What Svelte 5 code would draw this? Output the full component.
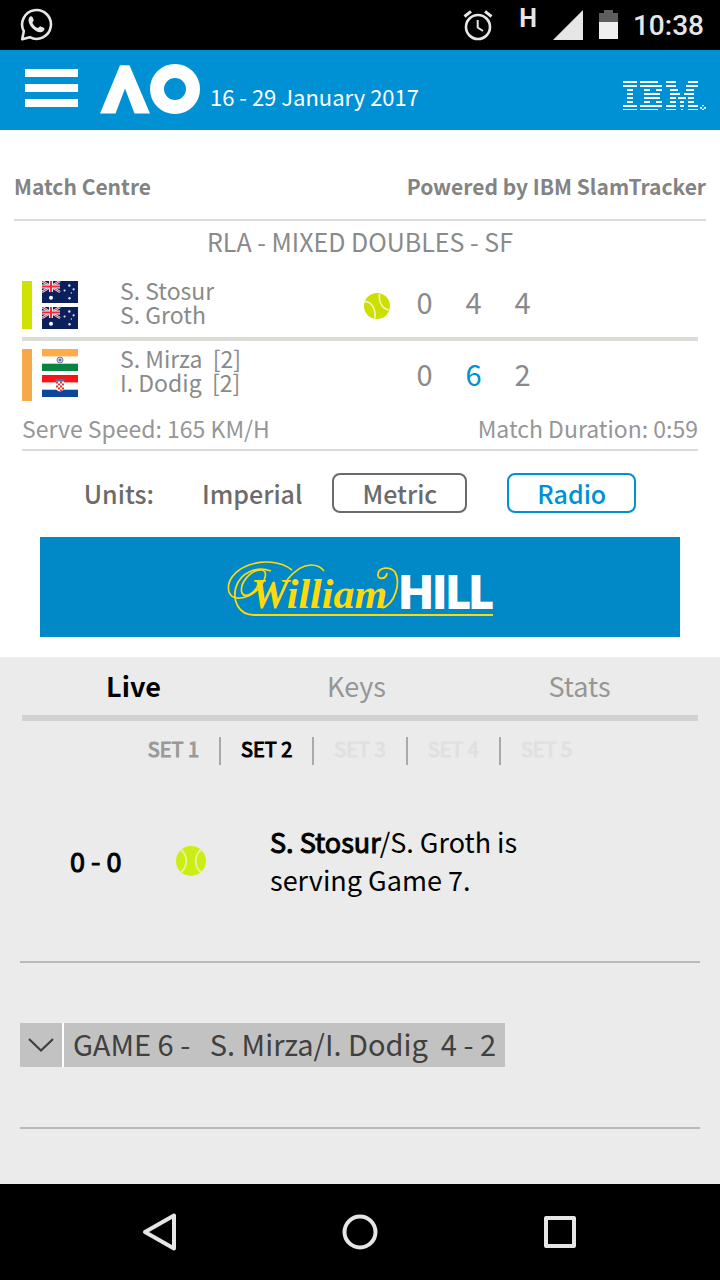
<script>
  const rows = [
    { color: '#d0e000', names: ['S. Stosur', 'S. Groth'], flags: ['au', 'au'], serving: true, scores: [0, 4, 4], won: -1 },
    { color: '#f5a94a', names: ['S. Mirza\u00a0 [2]', 'I. Dodig\u00a0 [2]'], flags: ['in', 'hr'], serving: false, scores: [0, 6, 2], won: 1 }
  ];
  const tabs = ['Live', 'Keys', 'Stats'];
  const sets = [1, 2, 3, 4, 5];
  let tab = $state('Live');
  let set = $state(2);
  let units = $state('Metric');

  // Stripes of the IBM mark: [row, start, end]
  const stripes = [
    [0,0,42],[1,0,42],[2,12,30],[3,12,30],[4,12,30],[5,12,30],[6,0,42],[7,0,42],
    [0,51,105],[1,51,117],[2,63,81],[2,99,117],[3,63,111],[4,63,111],[5,63,81],[5,99,117],[6,51,117],[7,51,105],
    [0,129,159],[0,195,225],[1,129,159],[1,189,225],[2,141,165],[2,189,213],[3,141,171],[3,183,213],
    [4,141,159],[4,165,189],[4,195,213],[5,141,159],[5,171,183],[5,195,213],[6,129,159],[6,171,183],[6,195,225],[7,129,159],[7,174,180],[7,195,225]
  ];
</script>

{#snippet flag(code)}
  <svg class="flag" viewBox="0 0 36 22" aria-hidden="true">
    {#if code === 'au'}
      <rect width="36" height="22" fill="#0a1f5c" />
      <path d="M0 0L18 11M18 0L0 11" stroke="#e8e4f0" stroke-width="2.4" />
      <path d="M0 0L18 11M18 0L0 11" stroke="#e03040" stroke-width="1" />
      <path d="M9 0V11M0 5.5H18" stroke="#f4eef4" stroke-width="4" />
      <path d="M9 0V11M0 5.5H18" stroke="#ee2b36" stroke-width="2" />
      <circle cx="9" cy="16.7" r="2" fill="#fff" />
      <g fill="#dfe4f2"><circle cx="27.3" cy="4.5" r="1.2" /><circle cx="22.6" cy="9.5" r="1.1" /><circle cx="31.6" cy="8.3" r="1.1" /><circle cx="29.3" cy="12" r=".7" /><circle cx="27.5" cy="17.3" r="1.2" /></g>
    {:else if code === 'in'}
      <rect width="36" height="22" fill="#fff" />
      <rect width="36" height="7.4" fill="#ffac46" />
      <rect y="14.7" width="36" height="7.3" fill="#068440" />
      <circle cx="18" cy="11" r="3" fill="#c9c9e2" stroke="#77779f" stroke-width="1" />
      <circle cx="18" cy="11" r="1.1" fill="#4d4d88" />
    {:else}
      <rect width="36" height="22" fill="#fff" />
      <rect width="36" height="7.4" fill="#fb1414" />
      <rect y="14.7" width="36" height="7.3" fill="#0c479d" />
      <path d="M13.5 3.5l2 .8 2.5-.9 2.5.9 2-.8v3h-9z" fill="#4a72a8" />
      <path d="M14 6.5h8v6q0 3.5-4 4-4-.5-4-4z" fill="#fff" />
      <path d="M14 6.5h2v2h-2zM18 6.5h2v2h-2zM16 8.5h2v2h-2zM20 8.5h2v2h-2zM14 10.5h2v2h-2zM18 10.5h2v2h-2zM16 12.5h2v2h-2zM20 12.5h2v2h-2zM18 14.5h2v1.6l-2 .4z" fill="#ee3030" />
    {/if}
  </svg>
{/snippet}

<div class="screen">
  <div class="status">
    <svg width="34" height="36" viewBox="0 0 34 36" aria-label="WhatsApp" role="img">
      <path d="M3.2 32.2L4.8 24.2A14.4 14.4 0 1 1 10.8 30.2Z" fill="none" stroke="#e6e6e6" stroke-width="2.6" stroke-linejoin="round" />
      <path d="M10.2 10.4c1-1.6 2.7-1.6 3.4-.2l1 2.5c.5 1.3-1.4 2.2-1.2 3 1 2.4 3 4.400 5.400 5.200 1 .3 1.700-2 3-1.500l3 1.400c1 .6.800 2-.3 3.100-3 2.700-7.400.7-10.500-2.200-3.600-3.500-5.600-8.100-3.800-11.300z" fill="#e6e6e6" />
    </svg>
    <div class="status-right">
      <svg width="30" height="32" viewBox="0 0 30 32" aria-hidden="true" fill="none" stroke="#e6e6e6">
        <circle cx="15" cy="18" r="12" stroke-width="2.6" />
        <path d="M14.700 11V18.500L20 22" stroke-width="2" />
        <path d="M1.500 7.500L8 2.300M28.500 7.500L22 2.300" stroke-width="3" />
      </svg>
      <span class="net">H</span>
      <svg width="30" height="30" viewBox="0 0 30 30" aria-hidden="true"><path d="M0 30L30 0V30z" fill="#e6e6e6" /></svg>
      <svg class="battery" width="20" height="30" viewBox="0 0 20 30" aria-hidden="true"><path d="M0 3H5V0H14V3H19V13H0z" fill="#5e5e5e" /><path d="M0 12H19V29H0z" fill="#efefef" /></svg>
      <time>10:38</time>
    </div>
  </div>

  <header>
    <button class="menu" aria-label="Menu"><svg width="53" height="38" viewBox="0 0 53 38"><path d="M0 0H53V8H0zM0 15H53V23H0zM0 30H53V38H0z" fill="#fff" /></svg></button>
    <svg width="100" height="50" viewBox="0 0 100 50" role="img" aria-label="AO">
      <path d="M20 1.200H29.500L50 49.500H34.500L25 24.500L15.500 49.500H0z" fill="#fff" />
      <circle cx="75" cy="25" r="18" fill="none" stroke="#fff" stroke-width="14" />
    </svg>
    <span class="dates">16 - 29 January 2017</span>
    <svg class="ibm" width="83" height="29" viewBox="0 0 249 87" role="img" aria-label="IBM">
      {#each stripes as [r, a, b]}
        <rect x={a} y={r * 12} width={b - a} height={r === 7 ? 3 : 6} fill="#fff" />
      {/each}
      <path d="M237 72h6v4h-6zM231 78h6v5h-6zM243 78h6v5h-6zM237 83h6v4h-6z" fill="#fff" />
    </svg>
  </header>

  <main>
    <div class="titles"><h1>Match Centre</h1><span>Powered by IBM SlamTracker</span></div>
    <section class="board">
      <h2>RLA - MIXED DOUBLES - SF</h2>
      <table>
        <colgroup><col class="c-flag" /><col class="c-name" /><col class="c-ball" /><col class="c-pts" /><col class="c-pts" /><col class="c-pts" /><col /></colgroup>
        <tbody>
          {#each rows as r}
            <tr>
              <td><div class="team"><i style="background:{r.color}"></i><div class="flags">{@render flag(r.flags[0])}{@render flag(r.flags[1])}</div></div></td>
              <th scope="row">{r.names[0]}<br />{r.names[1]}</th>
              <td>
                {#if r.serving}
                  <svg class="ball" width="26" height="26" viewBox="0 0 26 26" role="img" aria-label="Serving"><circle cx="13" cy="13" r="13" fill="#cddf00" /><path d="M1 8.500C8 9 12 16 10.800 25.500M15.500.8C14.500 9 18 15.500 25 17.200" fill="none" stroke="#f1f6c8" stroke-width="1.600" /></svg>
                {/if}
              </td>
              {#each r.scores as s, i}<td class="score" class:won={i === r.won}>{s}</td>{/each}
              <td></td>
            </tr>
          {/each}
        </tbody>
      </table>
      <div class="facts"><span>Serve Speed: 165 KM/H</span><span>Match Duration: 0:59</span></div>
    </section>

    <div class="units">
      <span class="label">Units:</span>
      <button class:on={units === 'Imperial'} onclick={() => (units = 'Imperial')}>Imperial</button>
      <button class:on={units === 'Metric'} onclick={() => (units = 'Metric')}>Metric</button>
      <button class="radio">Radio</button>
    </div>

    <a class="ad" href="#william-hill" aria-label="William Hill">
      <svg width="270" height="60" viewBox="0 0 270 60">
        <g fill="none" stroke="#ffd90a">
          <path d="M67 13C56 4 38 3 24 8C10 13 1 24 4 35C8 46 26 41 35 30C41 22 43 13 36 13C25 13 14 27 17 36C20 42 30 36 33 28" stroke-width="1.700" />
          <path d="M46 14C32 9 16 15 11 30C7 44 14 58 29 58H268" stroke-width="1.800" />
          <path d="M62 23C70 13 78 8 86 8C92 8 96 10 99 14" stroke-width="1.600" />
          <path d="M162 16C161 23 152 23 153 17C154 10 165 9 170 15C176 26 170 47 157 51" stroke-width="1.800" />
        </g>
        <text class="script" x="26" y="51">William</text>
        <text class="hill" x="174" y="51">HILL</text>
      </svg>
    </a>
  </main>

  <section class="live">
    <nav class="tabs" aria-label="Views">
      {#each tabs as t}<button class:on={tab === t} onclick={() => (tab = t)}>{t}</button>{/each}
    </nav>
    <div class="sets">
      {#each sets as n}<button class:on={set === n} disabled={n > 2} onclick={() => (set = n)}>SET {n}</button>{/each}
    </div>
    <div class="point">
      <strong class="now">0 - 0</strong>
      <svg width="30" height="30" viewBox="0 0 30 30" aria-hidden="true"><circle cx="15" cy="15" r="15" fill="#cdee15" /><path d="M5 3.500C12 10 12 20 5 26.500M25 3.500C18 10 18 20 25 26.500" fill="none" stroke="#e8f39a" stroke-width="1.800" /></svg>
      <p><strong>S. Stosur</strong>/S. Groth is serving Game 7.</p>
    </div>
    <div class="game">
      <button aria-label="Expand game 6"><svg width="26" height="14" viewBox="0 0 26 14"><path d="M1 1L13 12.500L25 1" fill="none" stroke="#404040" stroke-width="2.200" /></svg></button>
      <span>GAME 6 -&nbsp;&nbsp; S. Mirza/I. Dodig&nbsp; 4 - 2</span>
    </div>
  </section>

  <nav class="system" aria-label="System">
    <button aria-label="Back"><svg width="36" height="40" viewBox="0 0 36 40"><path d="M3 20L32 3.500V36.500z" /></svg></button>
    <button aria-label="Home"><svg width="36" height="40" viewBox="0 0 36 40"><circle cx="18" cy="20" r="15.500" /></svg></button>
    <button aria-label="Recent apps"><svg width="36" height="40" viewBox="0 0 36 40"><rect x="4" y="6" width="28" height="28" /></svg></button>
  </nav>
</div>

<style>
  :global(body) { background: #fff; }
  .screen { min-height: 100vh; display: flex; flex-direction: column; font-family: "Noto Sans CJK SC", "Noto Sans", sans-serif; color: #8a8a8a; }
  svg { display: block; flex: none; }
  button { font: inherit; color: inherit; background: none; border: 0; padding: 0; margin: 0; cursor: pointer; }
  h1, h2, p { margin: 0; font: inherit; }

  .status { height: 50px; background: #000; display: flex; align-items: center; justify-content: space-between; padding: 0 16px 0 19px; color: #e6e6e6; }
  .status-right { display: flex; align-items: center; font-family: Roboto, sans-serif; }
  .net { font-weight: 700; font-size: 25px; line-height: 24px; margin: 0 16px 12px 26px; }
  .battery { margin: 0 14px 0 16px; }
  time { font-size: 28px; line-height: 50px; font-weight: 500; padding-top: 2px; }

  header { height: 80px; background: #0091d5; display: flex; align-items: flex-start; padding: 14px 14px 0 25px; box-sizing: border-box; color: #fff; }
  .menu { padding: 5px 22px 0 0; }
  .dates { font-size: 22px; line-height: 24px; padding: 20px 0 0 10px; }
  .ibm { margin: 17px 0 0 auto; }

  .titles { display: flex; justify-content: space-between; margin: 0 14px; height: 89px; border-bottom: 2px solid #dcdcd6; font-size: 21px; font-weight: 700; line-height: 112px; color: #838383; }
  .board { padding: 0 22px; }
  h2 { text-align: center; font-size: 25px; line-height: 40px; padding-bottom: 16px; }
  table { width: 100%; table-layout: fixed; border-collapse: collapse; }
  .c-flag { width: 98px; } .c-name { width: 233px; } .c-ball { width: 47px; } .c-pts { width: 49px; }
  td, th { padding: 4px 0 8px; vertical-align: top; text-align: left; }
  tr:first-child > * { border-bottom: 4px solid #dcdcd6; }
  tr + tr > * { padding-top: 8px; }
  .team { display: flex; gap: 10px; }
  .team i { width: 10px; }
  .flags { display: flex; flex-direction: column; gap: 4px; }
  .flag { width: 36px; height: 22px; }
  tr + tr .flags { padding-bottom: 4px; }
  th { font-weight: 400; font-size: 23px; line-height: 24px; padding-top: 1px; }
  tr + tr th { padding-top: 5px; }
  .ball { margin: 12px 0 0 11px; }
  .score { font-size: 29px; line-height: 40px; text-align: center; }
  tr + tr .score { line-height: 48px; }
  .won { color: #0091d5; }
  .facts { display: flex; justify-content: space-between; height: 40px; font-size: 23px; line-height: 38px; border-bottom: 2px solid #dcdcd6; color: #969696; }

  .units { display: flex; justify-content: center; height: 40px; margin: 22px 0 24px; font-size: 25px; font-weight: 500; color: #6b6b6b; line-height: 36px; }
  .units .label { margin-right: 18px; line-height: 40px; }
  .units button { border: 2px solid transparent; border-radius: 8px; padding: 0 28px; }
  .units button.on { border-color: #6b6b6b; }
  .units .radio { margin-left: 40px; border-color: #0091d5; color: #0091d5; }

  .ad { display: flex; justify-content: center; align-items: center; height: 100px; margin: 0 40px 20px; background: #0088c7; }
  .script { font: italic 700 42px "Liberation Serif", serif; fill: #ffd90a; }
  .hill { font: 900 44px Lato, "Liberation Sans", sans-serif; fill: #fff; stroke: #fff; stroke-width: 2px; }

  .live { flex: 1; background: #ebebeb; padding: 0 20px; }
  .tabs { display: grid; grid-template-columns: repeat(3, 1fr); margin: 0 2px; padding-right: 7px; height: 58px; border-bottom: 6px solid #d2d2d2; font-size: 27px; line-height: 58px; color: #969696; }
  .tabs .on { color: #000; font-weight: 700; }
  .sets { display: flex; justify-content: center; padding-top: 16px; font-size: 20px; line-height: 24px; color: #999; }
  .sets button { height: 28px; padding: 0 20px 5px; -webkit-text-stroke: 1px; }
  .sets button + button { border-left: 2px solid #a9a9a9; }
  .sets button:disabled { color: #e0e0e0; }
  .sets .on { color: #000; }
  .point { display: flex; align-items: center; height: 192px; padding-bottom: 4px; border-bottom: 2px solid #b9b9b9; color: #000; font-size: 27px; line-height: 38px; }
  .point strong { font-weight: 400; -webkit-text-stroke: 1px; }
  .now { width: 106px; padding-left: 50px; }
  .point p { margin-left: 64px; width: 280px; }
  .game { display: flex; gap: 2px; height: 44px; padding: 60px 0; border-bottom: 2px solid #b9b9b9; font-size: 29px; line-height: 40px; color: #404040; }
  .game > * { background: #c2c2c2; }
  .game button { width: 42px; display: grid; place-items: center; border-right: 2px solid #fff; box-sizing: content-box; }
  .game { gap: 0; }
  .game span { padding: 0 9px; }

  .system { height: 96px; background: #000; display: flex; justify-content: center; gap: 164px; }
  .system svg { fill: none; stroke: #e6e6e6; stroke-width: 4; stroke-linejoin: round; }
</style>
